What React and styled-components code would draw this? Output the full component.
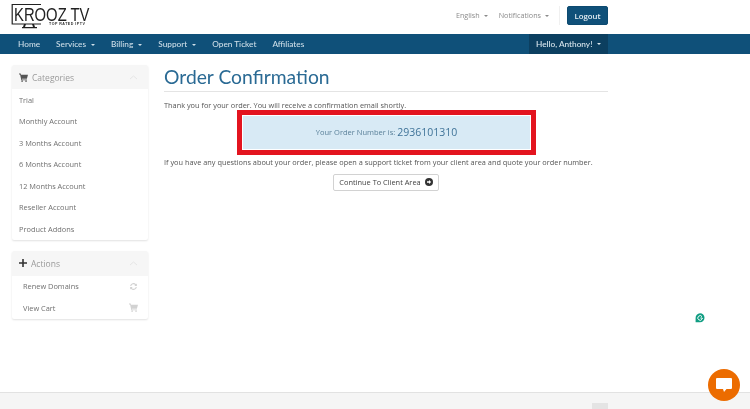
import React from "react";
import styled, { createGlobalStyle } from "styled-components";

const Global = createGlobalStyle`
  html, body { margin: 0; padding: 0; background: #fff; overflow: hidden; }
  body { font-family: "Open Sans", "Liberation Sans", sans-serif; color: #555; }
  * { box-sizing: border-box; }
`;
const Page = styled.div`
  width: 750px; height: 409px; display: flex; flex-direction: column; position: relative; overflow: hidden;
  filter: blur(0.45px);
`;
const Header = styled.header`
  height: 34px; display: flex; align-items: flex-start; justify-content: space-between; padding: 0 142px 0 11px; flex: none;
`;
const LogoWrap = styled.div`
  position: relative; width: 80px; height: 30px; flex: none;
`;
const LogoMain = styled.span`
  position: absolute; left: 3px; top: 7.5px; font: 400 19px/14px "Liberation Sans", sans-serif; color: #222; white-space: nowrap;
  transform: scaleX(0.78); transform-origin: left center;
`;
const LogoSub = styled.span`
  position: absolute; left: 38px; top: 21.5px; font: 700 3.6px/4px "Liberation Sans", sans-serif; letter-spacing: 0.5px; color: #333; white-space: nowrap;
`;
const TopRight = styled.div`
  display: flex; align-items: center; height: 19px; margin-top: 6px;
`;
const TopLink = styled.span`
  font-size: 7.2px; color: #8a8a8a; margin: 0 ${p => p.$gap}px 2px 0; white-space: nowrap;
`;
const Caret = styled.i`
  display: inline-block; width: 0; height: 0; margin-left: ${p => p.$ml || 4}px; vertical-align: middle;
  border-left: 2px solid transparent; border-right: 2px solid transparent; border-top: 2px solid currentColor;
`;
const Sep = styled.div`
  width: 1px; height: 19px; background: #f0f0f0; margin-right: 7px;
`;
const Logout = styled.button`
  width: 41px; height: 19px; padding: 0; border: 1px solid #0d4a70; border-radius: 2px; background: #0f5079; color: #e8f0f5;
  font: 600 7.8px "Open Sans", sans-serif;
`;
const Nav = styled.nav`
  height: 19.5px; background: #0f5079; display: flex; align-items: stretch; justify-content: space-between; padding: 0 142px 0 12px; flex: none;
`;
const NavList = styled.div`
  display: flex; align-items: center; gap: 16px;
`;
const NavItem = styled.span`
  font: 500 8.25px "Lato", sans-serif; color: #cfdfe9; white-space: nowrap; margin-left: ${p => p.$ml || 0}px;
`;
const Hello = styled.div`
  width: 79px; background: #0c3f60; display: flex; align-items: center; padding-left: 7px;
  font: 500 8.25px "Lato", sans-serif; color: #dbe7ee; white-space: nowrap;
`;
const Body = styled.main`
  display: flex; gap: 16px; padding: 11.5px 142px 0 12px; flex: 1;
`;
const Sidebar = styled.aside`
  width: 136px; flex: none; display: flex; flex-direction: column; gap: 11px;
`;
const Panel = styled.section`
  background: #fff; border-radius: 2px; box-shadow: 0 1px 2px rgba(0,0,0,.12);
`;
const PanelHead = styled.div`
  height: ${p => p.$h}px; background: #f6f6f6; display: flex; align-items: center; padding: 0 10px 0 7px; gap: 4px;
  font-size: 8.5px; color: #9a9a9a; border-radius: 2px 2px 0 0;
`;
const PanelTitle = styled.span`
  flex: 1;
`;
const SideRow = styled.div`
  height: 21.5px; display: flex; align-items: center; justify-content: space-between; padding: 0 10px 0 ${p => p.$pl}px;
  font-size: 7.4px; color: #707070; white-space: nowrap;
`;
const Content = styled.div`
  width: 444px; display: flex; flex-direction: column;
`;
const Title = styled.h1`
  margin: 0; height: 26.5px; border-bottom: 1px solid #e4e4e4; font: 400 19.3px/24px "Lato", sans-serif; color: #2a6a94; white-space: nowrap;
`;
const Para = styled.p`
  margin: ${p => p.$mt}px 0 0; font-size: 7.35px; line-height: 10px; color: #555; white-space: nowrap;
`;
const Highlight = styled.div`
  width: 299px; height: 45px; margin: 0 0 0 73px; border: 5px solid #e3141f; padding: 1px;
  background: #fff; flex: none;
`;
const Alert = styled.div`
  width: 100%; height: 100%; background: #d8eaf5; display: flex; align-items: center; justify-content: center; gap: 2px;
  font-size: 7.5px; color: #5a8099; white-space: nowrap;
`;
const OrderNo = styled.span`
  font-size: 10.5px; color: #3f7398;
`;
const BtnRow = styled.div`
  display: flex; justify-content: center; margin-top: 7px;
`;
const Button = styled.button`
  height: 17px; width: 106px; padding: 0; background: #fff; border: 1px solid #d2d2d2; border-radius: 2px; color: #444;
  display: flex; align-items: center; justify-content: center; gap: 4px;
  font: 400 7.4px "Open Sans", sans-serif; white-space: nowrap;
`;
const Footer = styled.footer`
  height: 17px; background: #f5f5f5; border-top: 1px solid #e2e2e2; flex: none; display: flex; justify-content: flex-end; align-items: flex-end; padding-right: 142px;
`;
const TopBtn = styled.div`
  width: 16px; height: 6px; background: #e4e4e4;
`;
const Chat = styled.div`
  position: absolute; left: 708px; top: 369px; width: 32px; height: 32px; border-radius: 50%; background: #ec6c00;
  display: flex; align-items: center; justify-content: center;
`;
const Gram = styled.svg`
  position: absolute; left: 695px; top: 313px;
`;

const Cart = ({ c, s = 9 }) => (
  <svg width={s} height={s} viewBox="0 0 16 16"><path fill={c} d="M0 1h3l.6 2H16l-2 7H5.2l.4 1.6H14V13H4.2L1.9 2.6H0z" /><circle cx="5.5" cy="14.5" r="1.4" fill={c} /><circle cx="12.5" cy="14.5" r="1.4" fill={c} /></svg>
);
const Chevron = () => (
  <svg width="9" height="5" viewBox="0 0 9 5"><path d="M1 4l3.5-3L8 4" fill="none" stroke="#e6e6e6" strokeWidth="1" /></svg>
);

export default function App() {
  const cats = ["Trial", "Monthly Account", "3 Months Account", "6 Months Account", "12 Months Account", "Reseller Account", "Product Addons"];
  return (
    <>
      <Global />
      <Page>
        <Header>
          <LogoWrap>
            <svg width="46" height="30" viewBox="0 0 46 30" style={{ position: "absolute", left: 0, top: 0 }}>
              <path d="M30 4.5H1.2v19.5H30" fill="none" stroke="#222" strokeWidth="1.2" />
              <path d="M13 24h2l-1 3h8l-1-3h2l1 3h2v1.2H11V27h1z" fill="#222" />
            </svg>
            <LogoMain>KROOZ TV</LogoMain>
            <LogoSub>TOP RATED IPTV</LogoSub>
          </LogoWrap>
          <TopRight>
            <TopLink $gap={11}>English<Caret /></TopLink>
            <TopLink $gap={10}>Notifications<Caret /></TopLink>
            <Sep />
            <Logout>Logout</Logout>
          </TopRight>
        </Header>
        <Nav>
          <NavList>
            <NavItem $ml={6}>Home</NavItem>
            <NavItem>Services<Caret $ml={5} /></NavItem>
            <NavItem>Billing<Caret $ml={5} /></NavItem>
            <NavItem>Support<Caret $ml={5} /></NavItem>
            <NavItem>Open Ticket</NavItem>
            <NavItem>Affiliates</NavItem>
          </NavList>
          <Hello>Hello, Anthony!<Caret $ml={5} /></Hello>
        </Nav>
        <Body>
          <Sidebar>
            <Panel>
              <PanelHead $h={24}>
                <Cart c="#555" />
                <PanelTitle>Categories</PanelTitle>
                <Chevron />
              </PanelHead>
              {cats.map(c => <SideRow key={c} $pl={7}>{c}</SideRow>)}
            </Panel>
            <Panel>
              <PanelHead $h={25}>
                <svg width="8" height="8" viewBox="0 0 8 8"><path d="M3.2 0h1.6v3.2H8v1.6H4.8V8H3.2V4.8H0V3.2h3.2z" fill="#333" /></svg>
                <PanelTitle>Actions</PanelTitle>
                <Chevron />
              </PanelHead>
              <SideRow $pl={11}>Renew Domains
                <svg width="9" height="9" viewBox="0 0 16 16"><path d="M2 7a6 6 0 0 1 10.5-3L14 2.5V7H9.5l1.6-1.6A4 4 0 0 0 4 7zM14 9a6 6 0 0 1-10.5 3L2 13.5V9h4.5l-1.6 1.6A4 4 0 0 0 12 9z" fill="#d2d2d2" /></svg>
              </SideRow>
              <SideRow $pl={11}>View Cart<Cart c="#d2d2d2" /></SideRow>
            </Panel>
          </Sidebar>
          <Content>
            <Title>Order Confirmation</Title>
            <Para $mt={8}>Thank you for your order. You will receive a confirmation email shortly.</Para>
            <Highlight>
              <Alert>Your Order Number is: <OrderNo>2936101310</OrderNo></Alert>
            </Highlight>
            <Para $mt={2}>If you have any questions about your order, please open a support ticket from your client area and quote your order number.</Para>
            <BtnRow>
              <Button>Continue To Client Area
                <svg width="8" height="8" viewBox="0 0 16 16"><circle cx="8" cy="8" r="8" fill="#333" /><path d="M4 6.7h4V4l4.2 4L8 12V9.3H4z" fill="#fff" /></svg>
              </Button>
            </BtnRow>
          </Content>
        </Body>
        <Footer><TopBtn /></Footer>
        <Gram width="10" height="10" viewBox="0 0 10 10">
          <path d="M5 .3a4.5 4.5 0 1 1 0 9H.6V5A4.5 4.5 0 0 1 5 .3z" fill="#0f9d82" />
          <path d="M7 3.6A2.3 2.3 0 1 0 7.2 6V5H5.4" fill="none" stroke="#fff" strokeWidth="1" />
        </Gram>
        <Chat>
          <svg width="16" height="14" viewBox="0 0 16 14"><path d="M1 0h14a1 1 0 0 1 1 1v9a1 1 0 0 1-1 1h-4.5L8 14l-1-3H1a1 1 0 0 1-1-1V1a1 1 0 0 1 1-1z" fill="#fff" /></svg>
        </Chat>
      </Page>
    </>
  );
}
